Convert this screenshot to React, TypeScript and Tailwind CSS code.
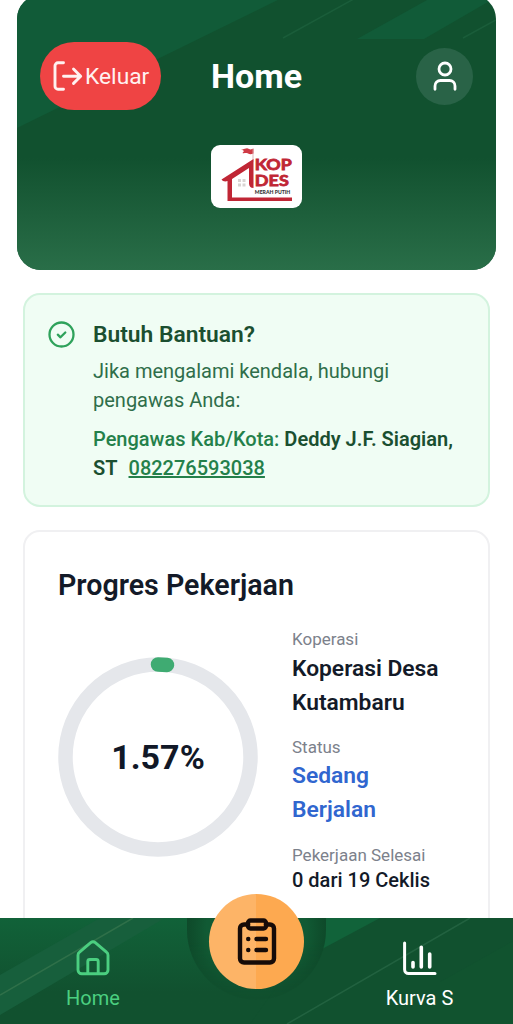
import React from 'react';

const PROGRESS = 1.57;

const LogoutIcon = () => (
    <svg width="30" height="30" viewBox="0 0 30 30" fill="none" stroke="currentColor" strokeWidth="2.9" strokeLinecap="round" strokeLinejoin="round">
        <path d="M10.500 1.800H5a3 3 0 0 0-3 3v20.400a3 3 0 0 0 3 3h5.500" />
        <path d="M10.500 15.200h17M20.500 8l7.200 7.200-7.200 7.200" />
    </svg>
);

const UserIcon = () => (
    <svg width="24" height="30" viewBox="0 0 24 30" fill="none" stroke="currentColor" strokeWidth="2.8" strokeLinecap="round" strokeLinejoin="round">
        <circle cx="12" cy="8" r="6" />
        <path d="M2 28.300v-3.300a5.500 5.500 0 0 1 5.500-5.500h9a5.500 5.500 0 0 1 5.500 5.500v3.300" />
    </svg>
);

const HomeIcon = () => (
    <svg width="34" height="36" viewBox="0 0 34 36" fill="none" stroke="currentColor" strokeWidth="2.9" strokeLinecap="round" strokeLinejoin="round">
        <path d="M2 15.200a4 4 0 0 1 1.500-3.100L14.700 2.700a3.600 3.600 0 0 1 4.600 0L30.500 12.100a4 4 0 0 1 1.500 3.100V30a3.800 3.800 0 0 1-3.800 3.800H5.800A3.800 3.800 0 0 1 2 30z" />
        <path d="M11.800 33.500v-12a2 2 0 0 1 2-2h6.400a2 2 0 0 1 2 2v12" />
    </svg>
);

const ChartIcon = () => (
    <svg width="34" height="36" viewBox="0 0 34 36" fill="none" stroke="currentColor" strokeWidth="3" strokeLinecap="round" strokeLinejoin="round">
        <path d="M1.600 3v26.500a4 4 0 0 0 4 4H32" />
        <g strokeWidth="3.6">
            <path d="M10 22.500v4.500M18.300 7.200v19.800M26.700 14v13" />
        </g>
    </svg>
);

const ClipboardIcon = () => (
    <svg width="40" height="48" viewBox="0 0 40 48" fill="none" stroke="currentColor" strokeWidth="4.400" strokeLinecap="round" strokeLinejoin="round">
        <path d="M11 6.500H7a4 4 0 0 0-4 4v30a4 4 0 0 0 4 4h26a4 4 0 0 0 4-4v-30a4 4 0 0 0-4-4h-4" />
        <rect x="11" y="2.500" width="18" height="8" rx="2.500" />
        <path d="M19.500 21h9.500M19.500 32h9.500M11.200 21h.1M11.200 32h.1" />
    </svg>
);

const KopdesLogo = () => (
    <svg width="91" height="63" viewBox="0 0 91 63" fill="none">
        <path d="M30 4c3 1.500 5-2 8 0 2 1 3 0 4.500-.5v5c-2.500 1-4 .8-5.500 0-2-1-4 .2-5.500-.5l1.500-2z" fill="#cf3a45" />
        <path d="M42 4v13" stroke="#d9a3a7" strokeWidth=".8" />
        <path d="M10.500 34.500 42.500 14v29c-3 0-4.500-2-4.500-4.500V23L21 34v18.500h60v3.500H16.500V36c-2 1-5 .5-6-1.500z" fill="#c02635" />
        <path d="M27 34h3v3h-3zM31.500 34h3v3h-3zM27 38.500h3v3h-3zM31.500 38.500h3v3h-3z" fill="#d8d4d2" />
        <g fill="#c02635" stroke="#c02635" strokeWidth=".8" fontFamily="Lato" fontWeight="700" fontSize="15.800">
            <text x="43.800" y="24.800" textLength="37" lengthAdjust="spacingAndGlyphs">KOP</text>
            <text x="43.800" y="40.600" textLength="34" lengthAdjust="spacingAndGlyphs">DES</text>
        </g>
        <text x="43.800" y="49.200" textLength="35.500" lengthAdjust="spacingAndGlyphs" fill="#333" fontFamily="Lato" fontWeight="900" fontSize="4.800">MERAH PUTIH</text>
    </svg>
);

const Header = () => (
    <header className="relative mx-[17px] -mt-[5px] h-[275px] shrink-0 overflow-hidden rounded-[24px] bg-[#11512f]">
        <svg className="absolute inset-0" width="479" height="275" viewBox="17 -5 479 275">
            <path d="M17-5H288L17 128z" fill="#115b38" />
            <path d="M357 39 436-5H500L424 39z" fill="#115b38" />
            <path d="M283 38 361-5M463 38l40-22" stroke="#1a5d3a" strokeWidth="1.500" />
        </svg>
        <div className="absolute inset-x-0 bottom-0 h-[112px] bg-gradient-to-b from-[#11512f] to-[#296e48]" />
        <div className="relative flex items-center justify-between pt-[47px] pr-[23px] pl-[23px]">
            <button className="flex h-[68px] w-[121px] items-center gap-0.5 rounded-full bg-[#ef4444] pl-[13px] text-[22.800px] text-[#fff1f0]">
                <LogoutIcon />
                <span className="mt-0.5">Keluar</span>
            </button>
            <h1 className="absolute left-[194px] text-[34px] font-bold text-white">Home</h1>
            <button className="flex size-[57px] items-center justify-center rounded-full bg-[#296347] text-white">
                <UserIcon />
            </button>
        </div>
        <div className="relative mx-auto mt-[35px] h-[63px] w-[91px] rounded-[9px] bg-white">
            <KopdesLogo />
        </div>
    </header>
);

const HelpCard = () => (
    <section className="mx-[23px] mt-[23px] flex h-[214px] shrink-0 rounded-[17px] border-2 border-[#d3f3de] bg-[#f0fdf4] pt-[26px] pl-[23px]">
        <svg className="shrink-0" width="28" height="28" viewBox="0 0 28 28" fill="none" stroke="#2fa25b" strokeWidth="2.300" strokeLinecap="round" strokeLinejoin="round">
            <circle cx="13.500" cy="13.500" r="12" />
            <path d="m9.800 13.700 2.700 2.600 4.800-4.800" />
        </svg>
        <div className="ml-[17px] text-[20px] leading-[28.500px] text-[#2f6e4a]">
            <h2 className="text-[22.800px] font-semibold text-[#1b4f30]">Butuh Bantuan?</h2>
            <p className="mt-[7.500px]">
                Jika mengalami kendala, hubungi
                <br />
                pengawas Anda:
            </p>
            <p className="mt-[11px] font-medium text-[#24804a]">
                Pengawas Kab/Kota: <span className="font-semibold text-[#1b4f30]">Deddy J.F. Siagian,</span>
                <br />
                <span className="mr-[11px] font-semibold text-[#1b4f30]">ST</span>
                <a className="underline">082276593038</a>
            </p>
        </div>
    </section>
);

const ProgressRing = ({ value }: { value: number }) => {
    const radius = 92.500;
    const length = 2 * Math.PI * radius;

    return (
        <div className="relative flex size-[200px] items-center justify-center">
            <svg className="absolute inset-0 -rotate-90" width="200" height="200" viewBox="0 0 200 200" fill="none" strokeWidth="14.500">
                <circle cx="100" cy="100" r={radius} stroke="#e5e7eb" />
                <circle cx="100" cy="100" r={radius} stroke="#3fab72" strokeLinecap="round" strokeDasharray={`${(length * value) / 100} ${length}`} />
            </svg>
            <span className="relative text-[34px] font-bold text-[#111827]">{value}%</span>
        </div>
    );
};

const ProgressCard = () => (
    <section className="mx-[23px] mt-[23px] h-[500px] shrink-0 rounded-[17px] border-2 border-[#f0f0f2] bg-white pt-[33px] pl-[33px]">
        <h2 className="text-[28.600px] leading-[40px] font-semibold text-[#131a28]">Progres Pekerjaan</h2>
        <div className="mt-[23px] flex">
            <div className="pt-[29px]">
                <ProgressRing value={PROGRESS} />
            </div>
            <div className="ml-[34px] text-[17px] leading-[23px] text-[#7c818b]">
                <p>Koperasi</p>
                <p className="mt-px text-[22.800px] leading-[34px] font-semibold text-[#131a28]">Koperasi Desa<br />Kutambaru</p>
                <p className="mt-[16px]">Status</p>
                <p className="text-[22.800px] leading-[34px] font-semibold text-[#3066cf]">Sedang<br />Berjalan</p>
                <p className="mt-[17px]">Pekerjaan Selesai</p>
                <p className="-mt-px text-[20px] leading-[28px] font-medium text-[#131a28]">0 dari 19 Ceklis</p>
            </div>
        </div>
    </section>
);

const BottomNav = () => (
    <nav className="relative h-[106px] shrink-0 bg-gradient-to-b from-[#116239] via-[#11512f] via-70% to-[#11512f] text-[20px]">
        <svg className="absolute inset-0" width="513" height="106" viewBox="0 918 513 106">
            <defs>
                <radialGradient id="notch" gradientUnits="userSpaceOnUse" cx="256.500" cy="930" r="69.500">
                    <stop offset=".72" stopColor="#115a34" />
                    <stop offset=".9" stopColor="#0f4f2d" />
                    <stop offset="1" stopColor="#0e4a2a" />
                </radialGradient>
                <linearGradient id="notchFade" x1="0" y1="0" x2="0" y2="1">
                    <stop offset=".3" stopColor="#fff" />
                    <stop offset="1" stopColor="#fff" stopOpacity=".25" />
                </linearGradient>
                <mask id="notchMask">
                    <rect x="187" y="918" width="139" height="82" fill="url(#notchFade)" />
                </mask>
            </defs>
            <path d="M326 918H513V1024H250z" fill="#11512f" />
            <path d="M0 975 100 918H165L0 1015z" fill="#175f3c" />
            <path d="M0 995 133 918" stroke="#2f7049" strokeWidth="1.500" />
            <path d="M326 918H380L322 949z" fill="#11633a" />
            <path d="M287 1024 470 918" stroke="#226240" strokeWidth="1.500" />
            <path d="M513 941 440 982v42h73z" fill="#11532f" />
            <path d="M187 918H326V930a69.500 69.500 0 0 1-139 0z" fill="url(#notch)" mask="url(#notchMask)" />
        </svg>
        <div className="relative flex justify-between pt-[22px]">
            <div className="flex w-[186px] flex-col items-center text-[#4bcf80]">
                <HomeIcon />
                <span className="mt-[8px] leading-[29px]">Home</span>
            </div>
            <div className="flex w-[187px] flex-col items-center text-white">
                <ChartIcon />
                <span className="mt-[8px] leading-[29px]">Kurva S</span>
            </div>
        </div>
        <button className="absolute -top-[24px] left-[209px] flex size-[95px] items-center justify-center rounded-full bg-[linear-gradient(90deg,#fdb467_50%,#fda950_50%)] text-[#160b08]">
            <ClipboardIcon />
        </button>
    </nav>
);

const App: React.FC = () => {
    return (
        <div className="flex h-[1024px] w-full flex-col overflow-hidden bg-white font-['Roboto',sans-serif]">
            <main className="flex min-h-0 flex-1 flex-col overflow-hidden">
                <Header />
                <HelpCard />
                <ProgressCard />
            </main>
            <BottomNav />
        </div>
    );
};

export default App;
